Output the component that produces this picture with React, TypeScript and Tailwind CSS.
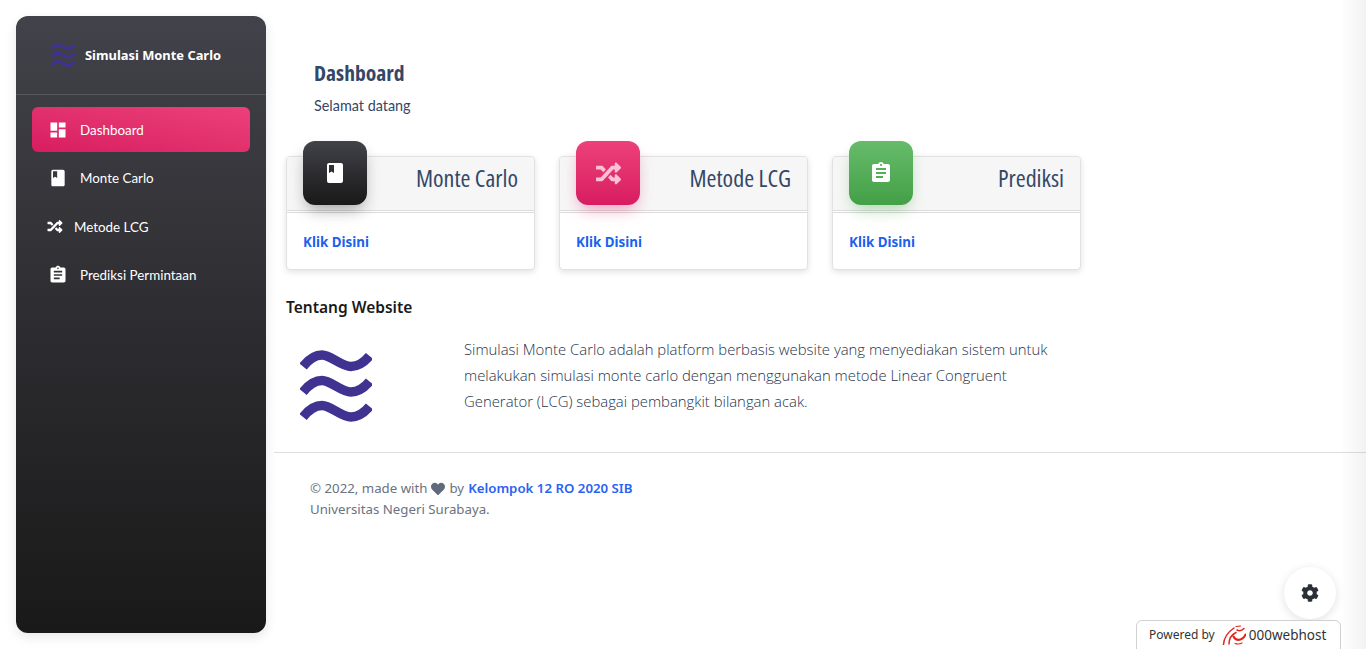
import { FaCog, FaHeart, FaRandom } from "react-icons/fa";
import { MdAssignment, MdBook, MdDashboard } from "react-icons/md";

const WAVE = "M3 16.5C9 9 15 5 22 5C31 5 41 16.5 51 16.5C58 16.5 64 12.5 69.5 6";

function WavesLogo({ className }: { className: string }) {
  return (
    <svg viewBox="0 0 72 72" fill="none" stroke="#3f3290" strokeWidth="9.5" className={className}>
      <path d={WAVE} />
      <path d={WAVE} transform="translate(0 25.5)" />
      <path d={WAVE} transform="translate(0 50.5)" />
    </svg>
  );
}

function HostLogo() {
  return (
    <svg viewBox="0 0 24 20" className="w-[24px] h-[20px]" fill="none" stroke="#e0231c" strokeLinecap="round">
      <path d="M1.5 19.5C2 13 6 7 12 3" strokeWidth="1.5" />
      <path d="M7 19C7 14 9 10 14 7.5" strokeWidth="1.5" />
      <path d="M14 1.5L18.5 1" strokeWidth="1.2" />
      <path d="M15 5C17 6 20 5.5 22 3.5" strokeWidth="1.5" />
      <path d="M11.5 11.5C14 16.5 20.5 16 23.5 9.5" strokeWidth="2" />
      <path d="M13 18.5C16 19.5 18 19 20 18" strokeWidth="1.2" />
    </svg>
  );
}

const menu = [
  { icon: MdDashboard, label: "Dashboard", active: true },
  { icon: MdBook, label: "Monte Carlo" },
  { icon: FaRandom, label: "Metode LCG", tight: true },
  { icon: MdAssignment, label: "Prediksi Permintaan" },
];

const cards = [
  { icon: MdBook, size: "text-[24px]", title: "Monte Carlo", box: "bg-gradient-to-b from-[#42424a] to-[#191919] shadow-[0_8px_16px_-4px_rgba(25,25,25,0.4)]", color: "text-white" },
  { icon: FaRandom, size: "text-[25px]", title: "Metode LCG", box: "bg-gradient-to-b from-[#ec407a] to-[#d81b60] shadow-[0_8px_16px_-4px_rgba(216,27,96,0.4)]", color: "text-[#f9c0d6]" },
  { icon: MdAssignment, size: "text-[24px]", title: "Prediksi", box: "bg-gradient-to-b from-[#66bb6a] to-[#43a047] shadow-[0_8px_16px_-4px_rgba(67,160,71,0.4)]", color: "text-white" },
];

export default function App() {
  return (
    <div className="relative h-screen overflow-hidden bg-white font-['Noto_Sans',sans-serif] flex">
      {/* Sidebar */}
      <aside className="ml-4 mt-4 w-[250px] h-[617px] shrink-0 rounded-xl bg-gradient-to-b from-[#42424a] to-[#191919] shadow-[0_4px_12px_rgba(0,0,0,0.1)]">
        <div className="h-[79px] border-b border-[#55555c] flex items-center pl-[35px]">
          <WavesLogo className="w-[24px] h-[24px]" />
          <span className="ml-[10px] pt-[1px] text-[12.9px] font-bold text-white whitespace-nowrap">Simulasi Monte Carlo</span>
        </div>
        <nav className="mt-[12px] px-4 flex flex-col gap-[3.5px]">
          {menu.map((item) => (
            <div
              key={item.label}
              className={
                item.active
                  ? "h-[45px] rounded-md flex items-center pl-[16px] bg-gradient-to-tr from-[#d81b60] to-[#ec407a] text-white"
                  : "h-[45px] rounded-md flex items-center pl-[16px] text-white"
              }
            >
              <item.icon className={item.tight ? "text-[15px] w-[16px] -ml-[1px]" : "text-[20px] w-[20px]"} />
              <span className={item.tight ? "ml-[11px] pt-[1px] text-[13.4px] font-['Lato',sans-serif]" : "ml-[12px] pt-[1px] text-[13.4px] font-['Lato',sans-serif]"}>{item.label}</span>
            </div>
          ))}
        </nav>
      </aside>

      {/* Main */}
      <main className="ml-2 flex-1 min-w-0">
        <div className="pl-10 pt-[58px]">
          <h1 className="text-[21.6px] leading-[26px] h-[26px] mt-[2px] font-bold text-[#344767] font-['Open_Sans',sans-serif] [font-stretch:75%]">Dashboard</h1>
          <p className="mt-[8px] text-[14.4px] leading-[24px] text-[#344767] font-['Lato',sans-serif]">Selamat datang</p>
        </div>

        <div className="pl-3 mt-[38px] flex gap-6">
          {cards.map((card) => (
            <div key={card.title} className="w-[249px] h-[114px] rounded-[4px] border border-[#e2e2e2] bg-white shadow-[0_2px_6px_rgba(0,0,0,0.12)] relative">
              <div className="h-[54px] bg-[#f6f6f6] border-b border-[#dcdcdc] rounded-t-[4px] flex items-center justify-end pr-4 pb-[11px]">
                <span className="text-[24px] text-[#344767] font-['Open_Sans',sans-serif] [font-stretch:75%]">{card.title}</span>
              </div>
              <div className="mt-[1px] border-t border-[#dcdcdc] pt-[20px] pl-4 text-[13.4px] font-bold leading-[18px] text-[#1a62f0]">Klik Disini</div>
              <div className={`absolute -top-4 left-4 w-16 h-16 rounded-xl flex items-center justify-center ${card.box}`}>
                <card.icon className={`${card.size} ${card.color}`} />
              </div>
            </div>
          ))}
        </div>

        <div className="pl-3 mt-[26px] w-[800px]">
          <h2 className="text-[15.5px] leading-[22px] font-semibold text-[#1a1a1a]">Tentang Website</h2>
          <div className="flex mt-[18px]">
            <WavesLogo className="ml-[14px] mt-[14px] w-[72px] h-[72px] shrink-0" />
            <p className="ml-[92px] w-[600px] text-[14.87px] leading-[26px] font-light text-[#263248] font-['Open_Sans',sans-serif]">
              Simulasi Monte Carlo adalah platform berbasis website yang menyediakan sistem untuk melakukan simulasi monte carlo dengan menggunakan metode Linear Congruent Generator (LCG) sebagai pembangkit bilangan acak.
            </p>
          </div>
        </div>

        <footer className="mt-[30px] border-t border-[#dedede] pl-9 pt-[25px] text-[13.25px] leading-[21px] text-[#6b7280]">
          <div className="flex items-center">
            © 2022, made with <FaHeart className="mx-[4px] text-[14px] text-[#5f6b7a]" /> by <span className="ml-[4px] font-semibold text-[#2a62f5]">Kelompok 12 RO 2020 SIB</span>
          </div>
          <div>Universitas Negeri Surabaya.</div>
        </footer>
      </main>

      {/* Right edge shadow of the hidden config panel */}
      <div className="absolute right-0 top-0 bottom-0 w-[26px] bg-gradient-to-r from-transparent to-black/5" />

      <button className="absolute left-[1284px] top-[567px] w-[52px] h-[52px] rounded-full bg-white shadow-[0_2px_10px_rgba(0,0,0,0.12)] flex items-center justify-center">
        <FaCog className="text-[18px] text-[#2b2f36]" />
      </button>

      <div className="absolute left-[1136px] top-[620px] w-[205px] h-[30px] bg-white border border-[#d0d0d0] rounded-t-[6px] flex items-center pl-[12px] text-[12px] text-[#333]">
        Powered by
        <span className="ml-[7px]"><HostLogo /></span>
        <span className="ml-[3px] text-[13.5px]">000webhost</span>
      </div>
    </div>
  );
}
